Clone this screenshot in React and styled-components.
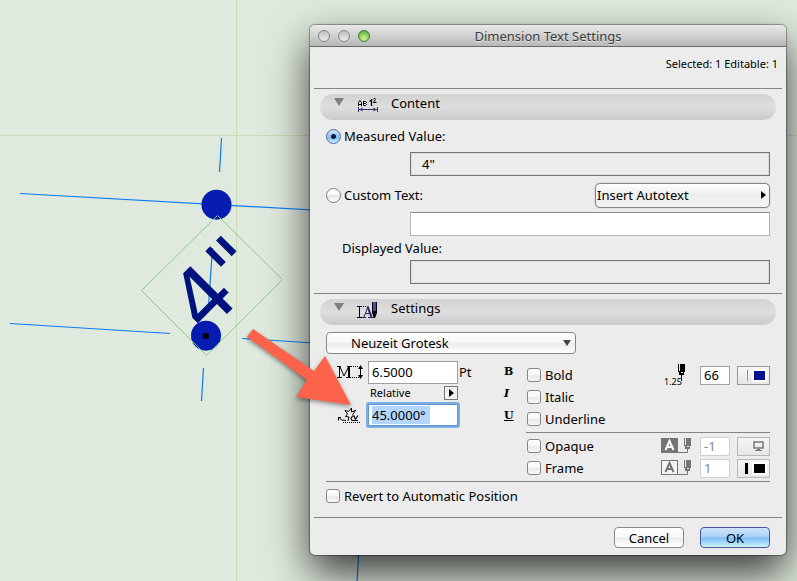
import React from 'react';
import styled, { createGlobalStyle, css } from 'styled-components';

const STYLE_OPTIONS = [
  { id: 'bold', label: 'Bold', mark: 'B' },
  { id: 'italic', label: 'Italic', mark: 'I' },
  { id: 'underline', label: 'Underline', mark: 'U' },
];

const App = () => {
  return (
    <Desktop>
      <GlobalStyle />
      <Drawing />
      <Dialog role="dialog" aria-labelledby="dialog-title">
        <TitleBar>
          <Lights>
            <Light type="button" aria-label="Close" />
            <Light type="button" aria-label="Minimize" />
            <Light type="button" aria-label="Zoom" $green />
          </Lights>
          <Title id="dialog-title">Dimension Text Settings</Title>
        </TitleBar>
        <Body>
          <Info>Selected: 1 Editable: 1</Info>
          <Rule />
          <SectionHeader>
            <Triangle />
            <ContentIcon />
            <SectionTitle>Content</SectionTitle>
          </SectionHeader>
          <Content>
            <ChoiceRow>
              <Radio
                type="radio"
                name="content"
                id="measured"
                defaultChecked
              />
              <Label htmlFor="measured">Measured Value:</Label>
            </ChoiceRow>
            <ValueField aria-label="Measured value" readOnly value={'4"'} />
            <ChoiceRow $tall>
              <Radio type="radio" name="content" id="custom" />
              <Label htmlFor="custom">Custom Text:</Label>
              <AutotextButton type="button">
                Insert Autotext
                <ArrowRight />
              </AutotextButton>
            </ChoiceRow>
            <ValueField aria-label="Custom text" $editable />
            <ChoiceRow $indent>
              <Label htmlFor="displayed">Displayed Value:</Label>
            </ChoiceRow>
            <ValueField id="displayed" readOnly value="" />
          </Content>
          <Rule />
          <SectionHeader>
            <Triangle />
            <SettingsIcon />
            <SectionTitle>Settings</SectionTitle>
          </SectionHeader>
          <Settings>
            <FontPicker>
              <FontSelect aria-label="Font" defaultValue="Neuzeit Grotesk">
                <option>Neuzeit Grotesk</option>
              </FontSelect>
              <ArrowDown />
            </FontPicker>
            <Columns>
              <SizeGrid>
                <SizeIcon />
                <SizeInput aria-label="Text size" defaultValue="6.5000" />
                <span>Pt</span>
                <Relative>
                  Relative
                  <SmallButton type="button" aria-label="Angle mode">
                    <ArrowRight />
                  </SmallButton>
                </Relative>
                <AngleIcon />
                <FocusBox>
                  <Selection />
                  <AngleInput aria-label="Text angle" defaultValue="45.0000°" />
                </FocusBox>
              </SizeGrid>
              <Styles>
                {STYLE_OPTIONS.map(({ id, label, mark }) => (
                  <StyleRow key={id}>
                    <Mark $kind={id}>{mark}</Mark>
                    <Check type="checkbox" id={id} />
                    <Label htmlFor={id}>{label}</Label>
                    {id === 'bold' && (
                      <PenGroup>
                        <PenIcon />
                        <PenInput aria-label="Text pen" defaultValue="66" />
                        <PenButton type="button" aria-label="Pick text pen">
                          <Stroke />
                          <Swatch $color="#00138c" />
                        </PenButton>
                      </PenGroup>
                    )}
                  </StyleRow>
                ))}
                <StyleRule />
                <StyleRow $indent>
                  <Check type="checkbox" id="opaque" />
                  <Label htmlFor="opaque">Opaque</Label>
                  <PenGroup>
                    <FillIcon filled />
                    <PenInput
                      aria-label="Background pen"
                      defaultValue="-1"
                      disabled
                    />
                    <PenButton
                      type="button"
                      aria-label="Pick background pen"
                      disabled
                    >
                      <ScreenIcon />
                    </PenButton>
                  </PenGroup>
                </StyleRow>
                <StyleRow $indent>
                  <Check type="checkbox" id="frame" />
                  <Label htmlFor="frame">Frame</Label>
                  <PenGroup>
                    <FillIcon />
                    <PenInput
                      aria-label="Frame pen"
                      defaultValue="1"
                      disabled
                    />
                    <PenButton type="button" aria-label="Pick frame pen" disabled>
                      <Stroke $thick />
                      <Swatch $color="#000" />
                    </PenButton>
                  </PenGroup>
                </StyleRow>
              </Styles>
            </Columns>
            <Rule />
            <RevertRow>
              <Check type="checkbox" id="revert" />
              <Label htmlFor="revert">Revert to Automatic Position</Label>
            </RevertRow>
          </Settings>
          <Rule />
          <Footer>
            <PushButton type="button">Cancel</PushButton>
            <PushButton type="button" $primary>
              OK
            </PushButton>
          </Footer>
        </Body>
      </Dialog>
      <Pointer />
    </Desktop>
  );
};

export default App;

const Drawing = () => (
  <DrawingSvg aria-hidden="true">
    <g stroke="#cbdcb4" shapeRendering="crispEdges">
      <line x1="0" y1="135" x2="100%" y2="135" />
      <line x1="236" y1="0" x2="236" y2="100%" />
    </g>
    <g stroke="#0a7cf5" strokeWidth="1.2">
      <line x1="20" y1="193.5" x2="330" y2="211" />
      <line x1="10" y1="323.5" x2="170" y2="333.5" />
      <line x1="242" y1="338.5" x2="330" y2="344" />
      <line x1="221.5" y1="138" x2="219.5" y2="172" />
      <line x1="212.5" y1="248" x2="208.5" y2="306" />
      <line x1="203.5" y1="368" x2="201.5" y2="401" />
      <line x1="359" y1="550" x2="357" y2="581" />
    </g>
    <circle cx="216.5" cy="204.7" r="15" fill="#061cb0" />
    <DrawingText transform="translate(205 336) rotate(-45)">4"</DrawingText>
    <circle cx="206" cy="335.7" r="15" fill="#061cb0" />
    <rect x="203" y="333" width="6" height="6" rx="2" fill="#000" />
    <polygon
      points="217.5,215.5 282.5,279.5 206.5,355.5 141.5,290.5"
      fill="none"
      stroke="#7fd27f"
    />
  </DrawingSvg>
);

const Pointer = () => (
  <PointerSvg width="120" height="100" viewBox="240 320 120 100">
    <polygon
      points="253,329 314,371 325,356 351,405 296,397 307,380 247,337"
      fill="#fd634b"
    />
  </PointerSvg>
);

const Triangle = () => (
  <svg width="10" height="9" viewBox="0 0 10 9">
    <path d="M0 1H10L5 9Z" fill="#808080" />
  </svg>
);

const ArrowRight = () => (
  <svg width="5" height="8" viewBox="0 0 5 8">
    <path d="M0 0L5 4L0 8Z" fill="#000" />
  </svg>
);

const ArrowDown = () => (
  <SelectArrow width="8" height="6" viewBox="0 0 8 6">
    <path d="M0 0H8L4 6Z" fill="#444" />
  </SelectArrow>
);

const ContentIcon = () => (
  <SectionIcon width="22" height="18" viewBox="0 0 22 18">
    <g fill="none" stroke="#000">
      <path d="M1.5 9V5.5L3 3.5L4.5 5.5V9M1.5 7.5H4.5" />
      <path d="M6.5 4V8.5H8.5L9.5 7.5L8.5 6.5H6.5M6.5 4.5H8.5L9.5 5.5L8.5 6.5" />
      <path d="M12.5 4.5L14.5 3V9" strokeWidth="1.3" />
      <path d="M16 2.5L17 1.5H18L18.5 2.5L16.5 5.5H19.5" />
    </g>
    <g stroke="#333373" fill="#333373">
      <path d="M1.5 10V15M20.5 10V15M2 12.5H20" />
      <path
        d="M2.5 12.5L5.5 10.5V14.5ZM19.5 12.5L16.5 10.5V14.5Z"
        stroke="none"
      />
    </g>
  </SectionIcon>
);

const SettingsIcon = () => (
  <SectionIcon width="22" height="18" viewBox="0 0 22 18">
    <g stroke="#000" fill="none">
      <path d="M0 4.5H5M0 15.5H5M2.5 5V15" />
      <path d="M6 4.5H10" strokeDasharray="1 1" />
    </g>
    <g stroke="#26265c" fill="none">
      <path d="M5 15.5H9M11 15.5H17M7 15L11 4.5M8.5 11.5H13" />
      <path d="M10.5 4.5L14.5 15" strokeWidth="2" />
    </g>
    <path d="M15 0H20V11L18 16H17L15 11Z" fill="#000" />
    <path d="M16 0H19V9H16Z" fill="#4a4aa8" />
  </SectionIcon>
);

const SizeIcon = () => (
  <svg width="26" height="14" viewBox="0 0 26 14">
    <path
      d="M0 1.5H4M10 1.5H14M0 12.5H5M9 12.5H14M2.5 2V12M3 2L7 11L11.5 2"
      stroke="#000"
      fill="none"
    />
    <path d="M12 2V12" stroke="#000" strokeWidth="2" />
    <path d="M14 1.5H22M15 12.5H22" stroke="#000" strokeDasharray="1 1" />
    <path d="M23.5 1V13" stroke="#000" />
    <path d="M21 4L23.5 0L26 4ZM21 10L23.5 14L26 10Z" fill="#000" />
  </svg>
);

const AngleIcon = () => (
  <svg width="24" height="17" viewBox="0 0 24 17">
    <g fill="none" stroke="#000">
      <path d="M8 3.5L11.5 4.5L14.5 1V5L18.5 3.5L15.5 8" />
      <path d="M8 3.5L10.5 7L8.5 9.5L12 10L11 14" />
      <path d="M1.5 10L4.5 13L9 13.5M1.5 13.5V10.5H4" />
      <path
        d="M21 8.5L17.5 13.5H15L14 11.5L15.5 9H17L19 13.5H21"
        strokeWidth="1.2"
      />
      <path d="M6 15.5H23" strokeDasharray="1 1" />
    </g>
  </svg>
);

const PenNib = ({ color, x }) => (
  <g transform={`translate(${x} 0)`}>
    <path d="M0 0H7V8H6V11H4V14H3V11H1V8H0Z" fill={color} />
    <path d="M1.5 0V7M3 8.5H5" stroke="#ececec" />
  </g>
);

const PenIcon = () => (
  <PenSvg width="23" height="22" viewBox="0 0 23 22">
    <PenNib color="#000" x={14} />
    <path d="M17.5 13V17" stroke="#000" />
    <text x="0" y="21" fontSize="9">
      1.25
    </text>
  </PenSvg>
);

const FillIcon = ({ filled }) => (
  <svg width="31" height="16" viewBox="0 0 31 16">
    <path d="M0 14.5H26.5V12" fill="none" stroke="#757575" />
    <rect
      x="0.5"
      y="0.5"
      width="16"
      height="14"
      fill={filled ? '#757575' : '#f4f4f4'}
      stroke="#757575"
    />
    <path
      d="M4.5 12L8.5 3L12.5 12M6 9H11"
      fill="none"
      stroke={filled ? '#fff' : '#757575'}
      strokeWidth="2"
    />
    <PenNib color="#757575" x={23} />
  </svg>
);

const ScreenIcon = () => (
  <svg width="14" height="11" viewBox="0 0 14 11">
    <rect
      x="1"
      y="1"
      width="9"
      height="6"
      fill="none"
      stroke="#757575"
      strokeWidth="1.5"
    />
    <path d="M4 8.5H7M2 9.5H9" stroke="#757575" />
  </svg>
);

const GlobalStyle = createGlobalStyle`
  * {
    box-sizing: border-box;
  }
  body {
    margin: 0;
    color: #000;
    font: 13px/16px 'Lucida Grande', 'Noto Sans', sans-serif;
  }
  button, input, select {
    margin: 0;
    padding: 0;
    color: inherit;
    font: inherit;
  }
  svg {
    display: block;
    flex: none;
  }
`;

const Desktop = styled.main`
  position: relative;
  min-height: 100vh;
  padding: 25px 11px 25px 310px;
  overflow: hidden;
  background: #dfe9dd;
`;

const DrawingSvg = styled.svg`
  position: absolute;
  inset: 0;
  width: 100%;
  height: 100%;
`;

const DrawingText = styled.text`
  font: 82px 'DejaVu Sans', sans-serif;
  fill: #00127f;
`;

const PointerSvg = styled.svg`
  position: absolute;
  top: 320px;
  left: 240px;
  pointer-events: none;
  filter: drop-shadow(0 2px 2px rgba(0, 0, 0, 0.4));
`;

const Dialog = styled.section`
  position: relative;
  border-radius: 5px;
  background: #ececec;
  box-shadow: 0 0 1px 1px rgba(0, 0, 0, 0.35), 0 18px 42px rgba(0, 0, 0, 0.75);
`;

const TitleBar = styled.header`
  display: grid;
  grid-template-columns: 70px 1fr 70px;
  align-items: center;
  height: 22px;
  padding: 0 8px;
  border-bottom: 1px solid #686868;
  border-radius: 5px 5px 0 0;
  background: linear-gradient(#e9e9e9, #b8b8b8);
`;

const Lights = styled.div`
  display: flex;
  gap: 8px;
`;

const Light = styled.button`
  width: 12px;
  height: 12px;
  border: 1px solid ${props => (props.$green ? '#4a7a30' : '#868686')};
  border-radius: 50%;
  background: ${props =>
    props.$green
      ? 'radial-gradient(circle at 50% 75%, #d4f5a8, #7cc850 60%, #5a9a40)'
      : 'linear-gradient(#c0c0c0, #ececec)'};
`;

const Title = styled.h1`
  margin: 0;
  color: #3c3c3c;
  font-size: 13px;
  font-weight: 400;
  text-align: center;
  text-shadow: 0 1px 0 #e4e4e4;
`;

const Body = styled.div`
  padding: 0 4px;
`;

const Info = styled.p`
  height: 41px;
  margin: 0;
  padding: 9px 4px 0;
  font-size: 11px;
  text-align: right;
`;

const Rule = styled.hr`
  height: 1px;
  margin: 0;
  border: 0;
  background: #858585;
`;

const SectionHeader = styled.div`
  display: flex;
  height: 26px;
  margin: 5px 6px 0;
  padding: 3px 14px;
  border-radius: 13px;
  background: linear-gradient(#d2d2d2, #dedede 50%, #cacaca);
`;

const SectionIcon = styled.svg`
  margin-left: 13px;
`;

const SectionTitle = styled.h2`
  margin: -2px 0 0 12px;
  font-size: 13px;
  font-weight: 400;
`;

const Content = styled.div`
  padding: 0 12px 9px;
`;

const ChoiceRow = styled.div`
  display: flex;
  align-items: center;
  gap: 3px;
  height: ${props => (props.$tall ? 36 : props.$indent ? 24 : 32)}px;
  padding-top: ${props => (props.$tall ? 2 : 0)}px;
  padding-left: ${props => (props.$indent ? 16 : 0)}px;
`;

const Label = styled.label`
  white-space: nowrap;
`;

const Radio = styled.input`
  flex: none;
  width: 15px;
  height: 15px;
  margin: 0;
  border: 1px solid #7c7c7c;
  border-radius: 50%;
  appearance: none;
  background: linear-gradient(#fff 40%, #e6e6e6 50%, #fff);

  &:checked {
    border-color: #5a6aa0;
    background: radial-gradient(circle, #0b1c38 2px, transparent 3px),
      linear-gradient(#cfe4fa, #7fbcf4 60%, #d0f2ff);
  }
`;

const ValueField = styled.input`
  display: block;
  width: calc(100% - 84px);
  height: 24px;
  margin-left: 84px;
  padding: 0 11px;
  border: 1px solid #757575;
  outline: 0;
  background: #ececec;
  box-shadow: inset 0 0 0 1px #dcdcdc;
  ${props =>
    props.$editable &&
    css`
      border-color: #8a8a8a #b4b4b4 #b4b4b4;
      background: #fff;
      box-shadow: none;
    `}
`;

const AutotextButton = styled.button`
  display: flex;
  align-items: center;
  justify-content: space-between;
  width: 175px;
  height: 25px;
  margin-left: auto;
  padding: 0 3px 0 1px;
  border: 1px solid #858585;
  border-radius: 5px;
  background: linear-gradient(#fff, #eee 45%, #f4f4f4);
  box-shadow: 0 0 1px #666;
`;

const Settings = styled.div`
  padding: 7px 12px 0;
`;

const FontPicker = styled.div`
  display: grid;
  align-items: center;
  width: 250px;
`;

const FontSelect = styled.select`
  grid-area: 1 / 1;
  height: 22px;
  padding: 0 24px;
  border: 1px solid #868686;
  border-radius: 4px;
  appearance: none;
  background: linear-gradient(#fff, #f6f6f6 48%, #ececec 52%, #fff);
`;

const SelectArrow = styled.svg`
  grid-area: 1 / 1;
  justify-self: end;
  margin-right: 5px;
  pointer-events: none;
`;

const Columns = styled.div`
  display: flex;
  justify-content: space-between;
  padding-top: 7px;
`;

const SizeGrid = styled.div`
  display: grid;
  grid-template-columns: 30px 90px auto;
  grid-template-rows: 22px 20px 24px;
  align-items: center;
  align-self: flex-start;
  column-gap: 1px;
  padding-left: 11px;
`;

const SizeInput = styled.input`
  width: 90px;
  height: 23px;
  padding: 0 3px;
  border: 1px solid #a0a0a0;
  outline: 0;
  background: #fff;
`;

const Relative = styled.div`
  display: flex;
  grid-column: 2;
  align-items: center;
  justify-content: space-between;
  padding-left: 2px;
  font-size: 11px;

  & ~ svg {
    grid-column: 1;
  }
`;

const SmallButton = styled.button`
  display: flex;
  align-items: center;
  justify-content: center;
  width: 14px;
  height: 14px;
  border: 1px solid #777;
  background: #f0f0f0;
`;

const FocusBox = styled.div`
  display: grid;
  grid-column: 2;
  align-items: center;
  height: 22px;
  padding: 0 3px;
  border: 1px solid #5c95cf;
  border-radius: 1px;
  background: #fff;
  box-shadow: 0 0 0 2px #7aaee0;
`;

const Selection = styled.span`
  grid-area: 1 / 1;
  width: 58px;
  height: 18px;
  background: #b4d5fe;
`;

const AngleInput = styled.input`
  grid-area: 1 / 1;
  width: 100%;
  border: 0;
  outline: 0;
  background: transparent;
`;

const Styles = styled.div`
  flex: 1;
  max-width: 266px;
  padding: 3px 0 2px;
`;

const StyleRow = styled.div`
  display: flex;
  align-items: center;
  height: 22px;
  padding-left: ${props => (props.$indent ? 23 : 0)}px;
`;

const Mark = styled.span`
  width: 23px;
  height: 22px;
  font: 700 11px/16px 'DejaVu Serif', serif;
  font-style: ${props => (props.$kind === 'italic' ? 'italic' : 'normal')};
  text-decoration: ${props =>
    props.$kind === 'underline' ? 'underline' : 'none'};
`;

const Check = styled.input`
  flex: none;
  width: 14px;
  height: 14px;
  margin: 0 4px 0 0;
  border: 1px solid #868686;
  border-radius: 3px;
  appearance: none;
  background: linear-gradient(#fff, #f6f6f6 50%, #e8e8e8 55%, #fafafa);
`;

const StyleRule = styled(Rule)`
  margin: 2px 0 2px 22px;
`;

const PenGroup = styled.div`
  display: flex;
  align-items: center;
  margin-left: auto;
`;

const PenSvg = styled.svg`
  margin-right: 5px;
  overflow: visible;
`;

const PenInput = styled.input`
  width: 30px;
  height: 19px;
  margin: 0 7px 0 8px;
  padding: 0 3px;
  border: 1px solid #a0a0a0;
  outline: 0;
  background: #fff;

  &:disabled {
    border-color: #cfcfcf;
    color: #858585;
  }
`;

const PenButton = styled.button`
  display: flex;
  align-items: center;
  justify-content: flex-end;
  gap: 4px;
  width: 33px;
  height: 19px;
  padding-right: 2px;
  border: 1px solid #999;
  background: linear-gradient(#f6f6f6, #e6e6e6);

  &:disabled {
    border-color: #b8b8b8;
  }
`;

const Stroke = styled.span`
  width: ${props => (props.$thick ? 3 : 1)}px;
  height: 11px;
  background: ${props => (props.$thick ? '#000' : '#909090')};
`;

const Swatch = styled.span`
  width: 15px;
  height: 13px;
  border: 2px solid #fff;
  background: ${props => props.$color};
`;

const RevertRow = styled.div`
  display: flex;
  align-items: center;
  height: 35px;
  padding-bottom: 7px;
`;

const Footer = styled.footer`
  display: flex;
  justify-content: flex-end;
  gap: 16px;
  padding: 9px 12px 7px;
`;

const PushButton = styled.button`
  width: 70px;
  height: 21px;
  border: 1px solid ${props => (props.$primary ? '#4a55a0' : '#8a8a8a')};
  border-radius: 4px;
  background: ${props =>
    props.$primary
      ? 'linear-gradient(#cfe3f9, #a8d0f8 48%, #7cbcf8 52%, #cdf6ff)'
      : 'linear-gradient(#fff, #f8f8f8 48%, #ececec 52%, #fff)'};
`;
